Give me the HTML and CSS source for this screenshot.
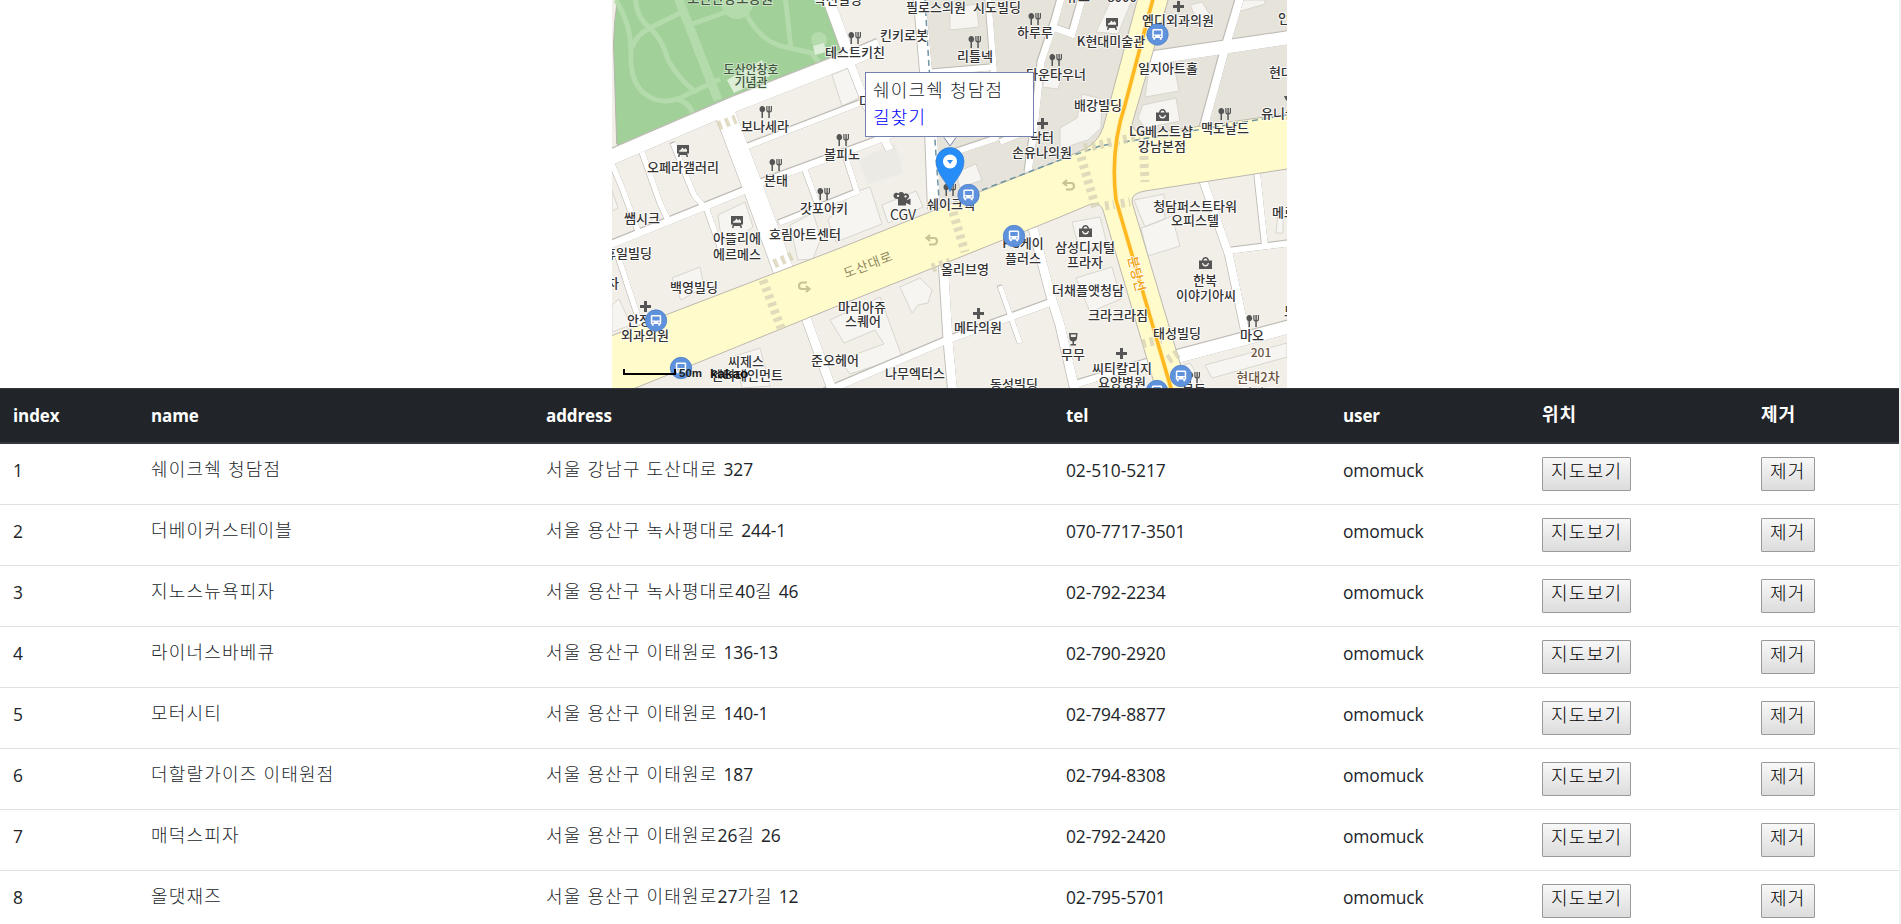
FILE: index.html
```html
<!DOCTYPE html>
<html lang="ko">
<head>
<meta charset="utf-8">
<title>맛집 목록</title>
<link rel="stylesheet" href="styles.css">
</head>
<body>
<div class="page">
<div class="map">
<svg class="map-tiles" viewBox="612 0 675 388" width="675" height="388">
<defs>
<symbol id="food" viewBox="0 0 14 12" overflow="visible"><path d="M3.3 0C1.500 0 .5 1.500.5 3.300.5 5 1.500 5.800 2.500 6.200V12H4V6.200C5.200 5.800 6.200 5 6.200 3.300 6.200 1.500 5 0 3.300 0ZM7.300 0V4.500Q7.500 6.300 9.300 6.600V12H10.800V6.600Q12.800 6.300 13 4.500V0H11.800V4.500L10.800 5.300V0H9.400V5.300L8.500 4.500V0Z"/></symbol>
<symbol id="art" viewBox="0 0 12 12" overflow="visible"><path fill-rule="evenodd" d="M0 0H12V8.500H10.300L11 12H9.500L9 10H3L2.500 12H1L1.700 8.500H0ZM2 6.800H10V5L8.500 3 7 4.500 5.500 2.500 3.500 5 2 5.500Z"/></symbol>
<symbol id="bag" viewBox="0 0 13 12" overflow="visible"><path fill-rule="evenodd" d="M0 3.500H3Q3.500 0 6.500 0T10 3.500H13V12H0ZM4.500 3.500H8.500Q8.300 1.500 6.500 1.500T4.500 3.500ZM3 6Q3.500 9.500 6.500 9.500T10 6L8.800 6Q8.500 8 6.500 8T4.200 6Z"/></symbol>
<symbol id="med" viewBox="0 0 11 11" overflow="visible"><path d="M4 0H7V4H11V7H7V11H4V7H0V4H4Z"/></symbol>
<symbol id="bus" viewBox="0 0 22 22" overflow="visible"><circle cx="11" cy="11" r="10.700" fill="#5f92dc" stroke="#4d7fc8" stroke-width=".8"/><path fill="#fff" fill-rule="evenodd" d="M7 5.500H15Q16.200 5.500 16.200 7V14.500H15.200V16.300H13.300V14.500H8.700V16.300H6.800V14.500H5.800V7Q5.800 5.500 7 5.500ZM7.300 7V11H14.700V7ZM7.300 12.200V13.400H8.700V12.200ZM13.300 12.200V13.400H14.700V12.200Z"/></symbol>
<symbol id="uturn" viewBox="0 0 14 12" overflow="visible"><path d="M5 1 1.500 4 5 7M2 4H9Q12 4 12 7T9 10.500H4" fill="none" stroke="#c9c494" stroke-width="2.200"/></symbol>
<g id="streets">
<path stroke-width="15" d="M600 162 735 104 847 60 880 46"/>
<path stroke-width="11" d="M825-10 847 50"/><path stroke-width="8" d="M845 50 867 106 890 150"/>
<path stroke-width="20" d="M722 105 754 190 784 272"/>
<path stroke-width="7" d="M600 249 741 192 763 182 870 143 900 131"/>
<path stroke-width="5.500" d="M746 147 868 100M642 152 660 203 668 220M673 143 694 195 708 211M706 207 722 252M612 164 623 190 638 231M616 250 641 326M805 170 821 213M845 155 857 192 779 223"/>
<path stroke-width="12" d="M919-10 931 130 934 210"/>
<path stroke-width="6" d="M988-5 994 72M925 73 996 67M955 152 997 138M1000 142 1035 128M993 115 996 140"/>
<path stroke-width="7" d="M1062-5 1055 20 1041 62 1034 130 1028 172M1055 28 1072 34 1083-5"/>
<path stroke-width="13" d="M1145 59 1300 36"/>
<path stroke-width="8" d="M1241-5 1226 45 1218 75 1203 130M1203 180 1229 255 1247 340"/>
<path stroke-width="6" d="M1257 172 1265 246M1228 251 1300 242"/>
<path stroke-width="13" d="M1168 359 1300 324"/>
<path stroke-width="9" d="M943 258 948 340 953 395M1033 228 1052 300 1060 325 1076 395M805 315 834 395"/>
<path stroke-width="7" d="M825 392 945 341 1052 302M1070 386 1155 360"/>
<path stroke-width="5" d="M1000 286 1020 343"/>
</g>
<path id="avenue" d="M590 344 835 250 940 208 982 191 1060 160 1085 149Q1098 142 1103 128L1140-10H1171L1132 124Q1134 134 1145 134L1300 112V167L1145 191Q1131 193 1132 202L1191 400H1159L1103 210Q1100 202 1091 204L1060 217 953 260 830 309 638 387 600 402Z"/>
</defs>
<path class="block" d="M612 0H1287V388H612Z"/>
<path class="block-dark" d="M925 0 939 207 1060 160 1287 115V0Z"/>
<g class="buildings">
<path d="M950 8 976 4 979 27 950 30ZM1150 64 1173 60 1179 91 1145 97ZM1143 105 1176 98 1180 121 1145 128 1138 118ZM1082 94 1102 99 1101 128 1088 140 1060 149V128L1077 118ZM1111 0H1132L1118 34 1096 32ZM1046 75 1062 77 1058 89 1042 87ZM1134 200 1164 194 1165 219 1145 227ZM1141 228 1172 216 1180 246 1148 256Z"/>
<path d="M832 75 851 67Q858 71 859 98L842 106ZM718 215 745 202 753 227 728 244 720 230ZM672 278 700 267 704 287 681 300ZM790 225 813 213 821 238 813 259 798 260ZM852 193 870 187 882 224 836 242 828 220ZM882 205 916 191 923 207 888 223ZM956 172 976 164 982 180 960 188Z"/>
<path d="M900 287 920 278 932 290 928 303 918 305 912 313ZM830 320 880 297 902 357 850 374 840 360 884 344 875 330 844 343ZM1072 222 1100 217 1107 244 1080 252ZM1076 278 1112 267 1121 299 1090 312ZM612 190 618 208 612 211ZM612 305 619 299 631 325 612 332ZM735 356 760 348 770 386 742 388Z"/>
<path d="M1205 365 1287 343V357L1212 378ZM1157 374 1190 363 1205 388H1163ZM1237 0H1265V4L1241 11ZM1190 5 1202 2 1212 18 1198 22ZM1278 211H1283V233H1276Z"/>
</g>
<path class="plaza" d="M858 160 895 143 903 173 868 184Z"/>
<path class="park" d="M618-5Q614 20 613.500 43L616.700 144 621.700 146.700 735 99 836 63 842 55 822-5Z"/>
<g class="park-paths">
<path stroke-width="9" d="M677-5 718 100"/><path stroke-width="5" d="M616 0Q631 25 631 50 629 85 648 96 660 104 678 99L720 79M635-5Q636 18 650 28 664 42 668 60 680 80 693 90M684 11 650 28Q636 35 632 48M692 24 735 9M745 12Q760 42 785 47L812 53 821 66M785-5 791 49M676 99Q692 103 693 117"/>
</g>
<circle class="park-spot" cx="737" cy="3" r="16"/><circle class="park-spot" cx="819" cy="40" r="8"/>
<path class="park-hall" d="M813 46 824 43 826 52 815 55ZM727 80 762 60 770 76 734 93Z"/>
<use href="#streets" class="casing"/>
<use href="#streets" class="casing casing-under"/>
<use href="#streets" class="street"/>
<use href="#avenue" class="avenue"/>
<path class="teal" d="M925 0 929 67 935 140 939 200M982 190 1060 160 1100 146 1287 115"/>
<g class="crossing">
<path d="M763 280 781 328"/><path d="M953 212 965 252"/><path d="M1081 157 1096 208"/><path d="M1143 140 1145 182"/><path d="M1105 206 1130 202"/><path d="M1084 148 1140 136"/><path d="M718 126 736 119"/><path d="M774 264 792 256"/><path d="M1142 344 1162 339"/><path d="M1168 360 1180 352"/><path d="M932 268 950 262"/>
</g>
<path class="line-casing" d="M1154-5 1125 105Q1110 150 1116 200L1173 395"/>
<path class="subway" d="M1154-5 1125 105Q1110 150 1116 200L1173 395"/>
<g transform="rotate(180 804 287)"><use href="#uturn" x="797" y="281" width="14" height="12"/></g><use href="#uturn" x="925" y="234" width="14" height="12"/><use href="#uturn" x="1062" y="179" width="14" height="12"/>
<g class="icon">
<use href="#food" x="759" y="106" width="14" height="12"/><use href="#food" x="769" y="159" width="14" height="12"/><use href="#food" x="836" y="134" width="14" height="12"/><use href="#food" x="817" y="188" width="14" height="12"/><use href="#food" x="848" y="32" width="14" height="12"/><use href="#food" x="968" y="36" width="14" height="12"/><use href="#food" x="1028" y="13" width="14" height="12"/><use href="#food" x="1049" y="54" width="14" height="12"/><use href="#food" x="1218" y="108" width="14" height="12"/><use href="#food" x="1246" y="315" width="14" height="12"/><use href="#food" x="943" y="184" width="14" height="12"/><use href="#food" x="1187" y="372" width="14" height="12"/>
<use href="#art" x="677" y="145" width="12" height="12"/><use href="#art" x="731" y="216" width="12" height="12"/><use href="#art" x="1106" y="18" width="12" height="12"/>
<use href="#bag" x="1156" y="109" width="13" height="12"/><use href="#bag" x="1079" y="225" width="13" height="12"/><use href="#bag" x="1199" y="257" width="13" height="12"/>
<use href="#med" x="640" y="301" width="11" height="11"/><use href="#med" x="1037" y="118" width="11" height="11"/><use href="#med" x="1173" y="1" width="11" height="11"/><use href="#med" x="973" y="308" width="11" height="11"/><use href="#med" x="1116" y="348" width="11" height="11"/>
<path fill-rule="evenodd" d="M898.500 193.500a3 3 0 1 0-2 5.200L898 199V205.500H906V203L910.500 205V198.500L907 200V199.200a3 3 0 1 0-2.800-5.200 3.300 3.300 0 0 0-5.700-.5ZM898 194.700a1.200 1.200 0 1 0 .1 0M905.500 195.200a1.200 1.200 0 1 0 .1 0"/>
<path fill-rule="evenodd" d="M1069 333H1077.500L1077 339Q1076 341 1074 341.500V344H1076V345.500H1070.500V344H1072.500V341.500Q1070 341 1069.500 339ZM1070.800 334.500 1071 337H1075.700L1076 334.500Z"/>
<path d="M1284 96H1290V102Q1286 102 1284 96Z"/>
</g>
<g class="label">
<text x="838" y="4">락선빌딩</text><text x="936" y="12">필로스의원</text><text x="997" y="12">시도빌딩</text><text x="904" y="40">킨키로봇</text><text x="855" y="57">테스트키친</text><text x="975" y="61">리틀넥</text><text x="1035" y="37">하루루</text><text x="1056" y="79">다운타우너</text><text x="1078" y="1">뮤즈</text><text x="1122" y="2">8000</text>
<text x="1178" y="25">엠디외과의원</text><text x="1111" y="46">K현대미술관</text><text x="1168" y="73">일지아트홀</text><text x="1098" y="110">배강빌딩</text><text x="1161" y="136">LG베스트샵</text><text x="1162" y="151">강남본점</text><text x="1225" y="133">맥도날드</text><text class="start" x="1278" y="23">인</text><text class="start" x="1269" y="77">현대</text><text class="start" x="1261" y="118">유니클</text>
<text x="1042" y="142">닥터</text><text x="1042" y="157">손유나의원</text><text class="start" x="859" y="106">더</text>
<text x="765" y="131">보나세라</text><text x="683" y="172">오페라갤러리</text><text x="776" y="185">본태</text><text x="842" y="159">볼피노</text><text x="824" y="213">갓포아키</text><text x="805" y="239">호림아트센터</text><text x="642" y="223">쌤시크</text><text x="737" y="243">아뜰리에</text><text x="737" y="259">에르메스</text><text x="628" y="258">휴일빌딩</text><text x="613" y="288">차</text><text x="694" y="292">백영빌딩</text><text x="645" y="325">안정선</text><text x="645" y="340">외과의원</text><text x="746" y="366">씨제스</text><text x="747" y="380">엔터테인먼트</text><text x="835" y="365">준오헤어</text><text class="cgv" x="903" y="220">CGV</text><text x="951" y="209">쉐이크쉑</text><text x="1023" y="248">PG케이</text><text x="1023" y="263">플러스</text><text x="965" y="274">올리브영</text><text x="862" y="312">마리아쥬</text><text x="863" y="326">스퀘어</text><text x="978" y="332">메타의원</text><text x="915" y="378">나무엑터스</text><text x="1014" y="389">동성빌딩</text>
<text x="1085" y="252">삼성디지털</text><text x="1085" y="267">프라자</text><text x="1088" y="295">더채플앳청담</text><text x="1118" y="320">크라크라짐</text><text x="1195" y="211">청담퍼스트타워</text><text x="1195" y="225">오피스텔</text><text x="1205" y="285">한복</text><text x="1206" y="300">이야기아씨</text><text x="1177" y="338">태성빌딩</text><text x="1252" y="340">마오</text><text x="1073" y="359">무무</text><text x="1122" y="373">씨티칼리지</text><text x="1122" y="387">요양병원</text><text class="start" x="1272" y="217">메르</text><text class="start" x="1284" y="316">모</text><text x="1194" y="394">목동</text>
<text class="park-text small" x="751" y="74">도산안창호</text><text class="park-text small" x="751" y="87">기념관</text><text class="park-text title" x="730" y="3">도산안창호공원</text>
<text class="brown small" x="1261" y="357">201</text><text class="brown" x="1258" y="382">현대2차</text><text class="brown" x="1259" y="398">아파트</text>
<text class="road-name" transform="translate(870 269) rotate(-21)">도산대로</text><text class="subway-name" transform="translate(1132 275) rotate(76)">분당선</text>
</g>
<use href="#bus" x="1146.500" y="23.500" width="22" height="22"/><use href="#bus" x="957.500" y="184" width="22" height="22"/><use href="#bus" x="1003" y="225" width="22" height="22"/><use href="#bus" x="645" y="309.500" width="22" height="22"/><use href="#bus" x="670" y="357" width="22" height="22"/><use href="#bus" x="1170" y="365" width="22" height="22"/><use href="#bus" x="1146" y="380" width="22" height="22"/>
<path class="pin" d="M950 191.500C948 183 936 174 936 161.500A14 14 0 0 1 964 161.500C964 174 952 183 950 191.500Z"/><circle cx="950" cy="161.500" r="7" fill="#fff"/><path fill="#2b8cf5" d="M947 160H953L950 164Z"/>
<path d="M944 137.500 950 146 956 137.500" fill="#fff" stroke="#7b86b5"/>
<path class="scale" d="M624 369V374H675V369"/><text class="scale-text" x="679" y="377">50m</text><text class="logo" x="710" y="378">kakao</text>
</svg>
<div class="info"><div>쉐이크쉑 청담점</div><a class="route">길찾기</a></div>
</div>
<table class="places">
<colgroup><col class="c-index"><col class="c-name"><col class="c-address"><col class="c-tel"><col class="c-user"><col class="c-view"><col></colgroup>
<thead><tr><th>index</th><th>name</th><th>address</th><th>tel</th><th>user</th><th class="ko">위치</th><th class="ko">제거</th></tr></thead>
<tbody>
<tr><td>1</td><td class="ko">쉐이크쉑 청담점</td><td class="ko">서울 강남구 도산대로 <span>327</span></td><td>02-510-5217</td><td>omomuck</td><td><button>지도보기</button></td><td><button>제거</button></td></tr>
<tr><td>2</td><td class="ko">더베이커스테이블</td><td class="ko">서울 용산구 녹사평대로 <span>244-1</span></td><td>070-7717-3501</td><td>omomuck</td><td><button>지도보기</button></td><td><button>제거</button></td></tr>
<tr><td>3</td><td class="ko">지노스뉴욕피자</td><td class="ko">서울 용산구 녹사평대로<span>40</span>길 <span>46</span></td><td>02-792-2234</td><td>omomuck</td><td><button>지도보기</button></td><td><button>제거</button></td></tr>
<tr><td>4</td><td class="ko">라이너스바베큐</td><td class="ko">서울 용산구 이태원로 <span>136-13</span></td><td>02-790-2920</td><td>omomuck</td><td><button>지도보기</button></td><td><button>제거</button></td></tr>
<tr><td>5</td><td class="ko">모터시티</td><td class="ko">서울 용산구 이태원로 <span>140-1</span></td><td>02-794-8877</td><td>omomuck</td><td><button>지도보기</button></td><td><button>제거</button></td></tr>
<tr><td>6</td><td class="ko">더할랄가이즈 이태원점</td><td class="ko">서울 용산구 이태원로 <span>187</span></td><td>02-794-8308</td><td>omomuck</td><td><button>지도보기</button></td><td><button>제거</button></td></tr>
<tr><td>7</td><td class="ko">매덕스피자</td><td class="ko">서울 용산구 이태원로<span>26</span>길 <span>26</span></td><td>02-792-2420</td><td>omomuck</td><td><button>지도보기</button></td><td><button>제거</button></td></tr>
<tr><td>8</td><td class="ko">올댓재즈</td><td class="ko">서울 용산구 이태원로<span>27</span>가길 <span>12</span></td><td>02-795-5701</td><td>omomuck</td><td><button>지도보기</button></td><td><button>제거</button></td></tr>
</tbody>
</table>
</div>
</body>
</html>
```
FILE: styles.css
```css
* { box-sizing: border-box; }
body { margin: 0; height: 924px; overflow: hidden; background: #fff; color: #212529; font: 400 17.4px/27px "Open Sans", "Noto Sans CJK KR", sans-serif; }
.page { height: 924px; overflow: hidden; border-right: 2px solid #f1f1f1; }
.map { position: relative; width: 675px; height: 388px; margin: 0 auto; }
.map-tiles { display: block; }
.block { fill: #f2efe9; }
.block-dark { fill: #e6e3db; }
.buildings { fill: #f7f5f2; stroke: #d9d6cf; stroke-width: 1; }
.plaza { fill: #ebeae5; }
.park { fill: #a1d099; stroke: #b5b5ae; stroke-width: 1; }
.park-paths { fill: none; stroke: #b4dbab; }
.park-spot { fill: #b4dbab; }
.park-hall { fill: #dcedd8; }
.casing, .street { fill: none; stroke: #fff; }
.casing { stroke: #bfbcb6; filter: drop-shadow(.8px .6px 0 #bfbcb6); }
.casing-under { filter: drop-shadow(-.8px -.6px 0 #bfbcb6); }
.avenue { fill: #fffbca; stroke: #bbb8ae; stroke-width: 1; }
.teal { fill: none; stroke: #6f95a3; stroke-width: 1.5; stroke-dasharray: 6 4; }
.crossing { stroke: #d9d4b8; stroke-width: 9; stroke-dasharray: 4 4; opacity: .8; }
.line-casing { fill: none; stroke: #fff6c0; stroke-width: 6; }
.subway { fill: none; stroke: #ffb81f; stroke-width: 3.6; }
.icon { fill: #555; }
.label { font: 500 13px "Noto Sans CJK KR", sans-serif; fill: #333; text-anchor: middle; stroke: #fff; stroke-width: 2px; stroke-opacity: .8; paint-order: stroke; stroke-linejoin: round; }
.start { text-anchor: start; }
.cgv { font-size: 14px; font-weight: 400; }
.park-text { fill: #40543e; stroke: #d5e9d0; }
.brown { fill: #6b5540; }
.small { font-size: 12px; }
.title { font-size: 13.4px; }
.road-name { fill: #8e8a62; font-weight: 400; letter-spacing: 1px; stroke: none; }
.subway-name { fill: #f0a010; font-size: 13px; }
.pin { fill: #258cf8; stroke: #3a80cf; stroke-width: .7; }
.scale { fill: none; stroke: #000; stroke-width: 2; }
.scale-text { font: bold 11.5px "Liberation Sans", sans-serif; fill: #222; }
.logo { font: bold 13.5px "Liberation Sans", sans-serif; fill: #111; }
.info { position: absolute; left: 253px; top: 72px; width: 169px; height: 65px; padding: 4px 7px; border: 1px solid #7380b0; background: #fff; font-size: 18px; font-weight: 300; letter-spacing: 1.2px; white-space: nowrap; }
.route { color: #00f; }
.places { width: 100%; border-collapse: separate; border-spacing: 0; table-layout: fixed; }
.c-index { width: 138px; } .c-name { width: 395px; } .c-address { width: 520px; } .c-tel { width: 277px; } .c-user { width: 199px; } .c-view { width: 219px; }
.places th { height: 56px; padding: 0 13px; background: #212529; color: #fff; border-top: 1px solid #32383e; border-bottom: 2px solid #32383e; text-align: left; font-weight: 700; font-size: 17px; letter-spacing: -.1px; }
.places th.ko { font-size: 18px; letter-spacing: 1px; padding-bottom: 3px; }
.places td { height: 61px; padding: 13px 13px 0; border-bottom: 1px solid #dee2e6; vertical-align: top; letter-spacing: -.1px; }
.places td.ko { padding-top: 12px; font-size: 18px; font-weight: 300; letter-spacing: 1.2px; white-space: nowrap; }
.places td.ko span { font-size: 17.4px; font-weight: 400; letter-spacing: -.1px; }
.places button { display: block; height: 34px; padding: 0 8px 5px; border: 1px solid #999; border-radius: 1px; background: linear-gradient(#f8f8f8, #dcdcdc); color: #000; font: inherit; font-size: 18px; font-weight: 300; letter-spacing: 1.3px; line-height: 27px; }
```
